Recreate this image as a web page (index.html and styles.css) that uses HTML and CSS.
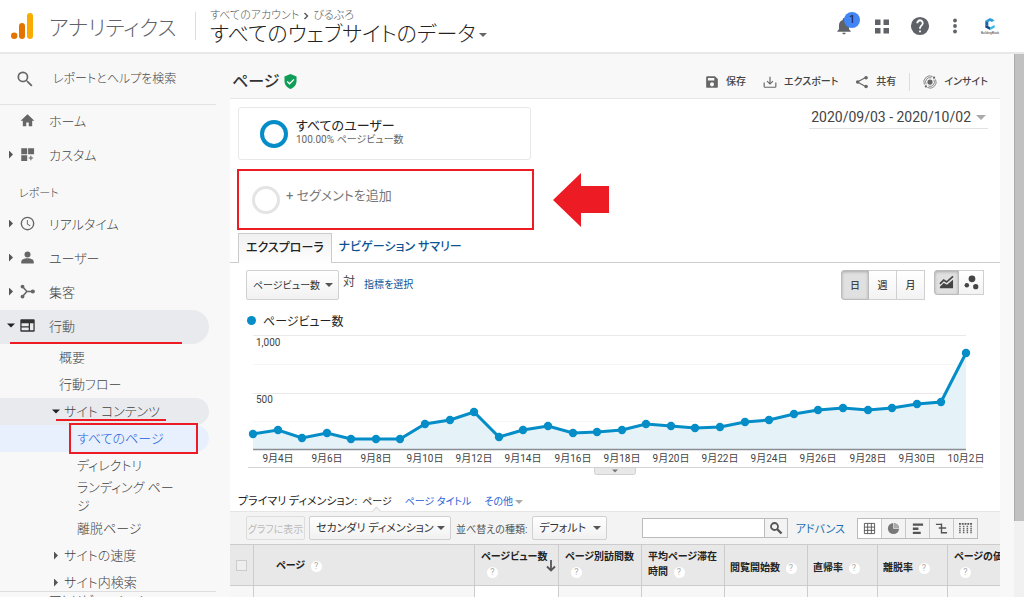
FILE: index.html
```html
<!DOCTYPE html>
<html lang="ja">
<head>
<meta charset="utf-8">
<meta name="viewport" content="width=device-width, initial-scale=1">
<title>アナリティクス</title>
<link rel="stylesheet" href="styles.css">
</head>
<body>
<header class="topbar">
  <svg class="logo" viewBox="0 0 24 26" aria-hidden="true"><rect x="16" y="0" width="6" height="26" rx="3" fill="#f9ab00"/><rect x="8" y="10" width="6" height="16" rx="3" fill="#e37400"/><circle cx="3.200" cy="22.800" r="3.200" fill="#e37400"/></svg>
  <span class="product">アナリティクス</span>
  <button class="account" type="button">
    <span class="crumbs">すべてのアカウント <svg class="crumb-arrow" viewBox="0 0 6 8"><path d="M1.500 1l3 3-3 3" fill="none" stroke="#555" stroke-width="1.400"/></svg> びるぶろ</span>
    <span class="view">すべてのウェブサイトのデータ<i class="caret"></i></span>
  </button>
  <div class="top-actions">
    <button class="icon-btn bell" type="button" aria-label="通知">
      <svg viewBox="0 0 24 24"><path d="M12 22c1.100 0 2-.9 2-2h-4c0 1.100.9 2 2 2zm6-6v-5c0-3.070-1.640-5.640-4.500-6.320V4a1.500 1.500 0 0 0-3 0v.68C7.630 5.360 6 7.920 6 11v5l-2 2v1h16v-1z"/></svg>
      <span class="badge">1</span>
    </button>
    <button class="icon-btn" type="button" aria-label="アプリ"><svg viewBox="0 0 20 20"><path d="M3 3.500h5.500V9H3zM11.500 3.500H17V9h-5.500zM3 12h5.500v5.500H3zM11.500 12H17v5.500h-5.500z"/></svg></button>
    <button class="icon-btn" type="button" aria-label="ヘルプ"><svg viewBox="1 1 22 22"><path d="M12 2a10 10 0 1 0 0 20 10 10 0 0 0 0-20zm1 17h-2v-2h2zm2.070-7.750-.9.920C13.450 12.900 13 13.500 13 15h-2v-.5c0-1.100.45-2.100 1.170-2.830l1.240-1.260A2 2 0 1 0 10 9H8a4 4 0 1 1 7.070 2.250z"/></svg></button>
    <button class="icon-btn more" type="button" aria-label="メニュー"><svg viewBox="0 0 20 20"><circle cx="10" cy="4.500" r="1.900"/><circle cx="10" cy="10" r="1.900"/><circle cx="10" cy="15.500" r="1.900"/></svg></button>
    <button class="icon-btn profile" type="button" aria-label="アカウント">
      <svg viewBox="4 0 12 15"><path d="M5 4l5-3 5 2.500-3 1.800-2-1-2 1.200z" fill="#2d9cdb"/><path d="M5 4l3.200 1.600v4.200L5 8.300z" fill="#1565a8"/><path d="M5 8.300l3.200 1.500 2 1.200V14L5 11.200z" fill="#0d4a86"/><path d="M10.200 11l4.800-2.500v2.800L10.200 14z" fill="#35b5e9"/></svg>
      <span class="profile-name">BuildingBlock</span>
    </button>
  </div>
</header>

<div class="shell">
  <aside class="sidebar">
    <label class="search"><svg viewBox="0 0 24 24"><path d="M15.500 14h-.79l-.28-.27A6.500 6.500 0 1 0 13.730 14.430l.27.28v.79l5.500 5.490L20.990 19.500zM9.500 14a4.500 4.500 0 1 1 0-9 4.500 4.500 0 0 1 0 9z"/></svg><input type="text" placeholder="レポートとヘルプを検索"></label>
    <nav class="nav">
      <a class="item" href="#"><i></i><svg viewBox="0 0 24 24"><path d="M10 21v-6h4v6h5.500v-8.500H23L12 2 1 12.500h3.500V21z"/></svg>ホーム</a>
      <a class="item" href="#"><i class="tri"></i><svg viewBox="0 0 24 24"><path d="M2 2h9.500v9.500H2zM13 2h9.500v9.500H13zM2 13h9.500v9.500H2zM16.500 14h1.800v2.700H21v1.800h-2.700v2.700h-1.800v-2.700h-2.700v-1.800h2.700z"/></svg>カスタム</a>
      <div class="group">レポート</div>
      <a class="item" href="#"><i class="tri"></i><svg viewBox="0 0 24 24"><path d="M12 1a11 11 0 1 0 0 22 11 11 0 0 0 0-22zm0 19.800a8.800 8.800 0 1 1 0-17.600 8.800 8.800 0 0 1 0 17.600zM12.500 6.500H11V13l4.900 3.200.9-1.200-4.300-2.700z"/></svg>リアルタイム</a>
      <a class="item" href="#"><i class="tri"></i><svg viewBox="0 0 24 24"><circle cx="12" cy="7" r="4.800"/><path d="M2 21.500v-2.800c0-3.600 5-5.500 10-5.500s10 1.900 10 5.500v2.800z"/></svg>ユーザー</a>
      <a class="item" href="#"><i class="tri"></i><svg viewBox="0 0 24 24"><path d="M4 4l7 8h9M11 12l-7 8" fill="none" stroke="currentColor" stroke-width="2.400"/><circle cx="4" cy="4" r="3"/><circle cx="4" cy="20" r="3"/><circle cx="20.500" cy="12" r="3.300"/></svg>集客</a>
      <a class="item open" href="#"><i class="tri down"></i><svg viewBox="0 0 24 24"><path fill-rule="evenodd" d="M2 2h20a1.500 1.500 0 0 1 1.500 1.500v17A1.500 1.500 0 0 1 22 22H2a1.500 1.500 0 0 1-1.500-1.500v-17A1.500 1.500 0 0 1 2 2zM2.500 8.500v4.500H14V8.500zM2.500 15v4.500H14V15zM16 8.500v11h5.500v-11z"/></svg><span>行動</span></a>
      <a class="sub" href="#">概要</a>
      <a class="sub" href="#">行動フロー</a>
      <a class="sub branch open" href="#"><i class="tri down"></i><span class="marked">サイト コンテンツ</span></a>
      <a class="sub leaf current" href="#"><span>すべてのページ</span></a>
      <a class="sub leaf" href="#">ディレクトリ</a>
      <a class="sub leaf wrap" href="#">ランディング ページ</a>
      <a class="sub leaf" href="#">離脱ページ</a>
      <a class="sub branch" href="#"><i class="tri"></i>サイトの速度</a>
      <a class="sub branch" href="#"><i class="tri"></i>サイト内検索</a>
    </nav>
    <div class="side-foot">アトリビューション</div>
  </aside>

  <main class="main">
    <div class="page-head">
      <h1>ページ</h1>
      <svg class="shield" viewBox="0 0 14 16"><path d="M7 0l6.500 2.500v5C13.500 11.500 10.500 15 7 16 3.500 15 .5 11.500.5 7.500v-5z" fill="#0f9d58"/><path d="M3.500 8l2.500 2.500 4.700-4.800" fill="none" stroke="#fff" stroke-width="1.500"/></svg>
      <div class="page-actions">
        <button type="button"><svg viewBox="0 0 24 24"><path fill-rule="evenodd" d="M4 2h13l5 5v13a2 2 0 0 1-2 2H4a2 2 0 0 1-2-2V4a2 2 0 0 1 2-2zm8 17.500a3.500 3.500 0 1 0 0-7 3.500 3.500 0 0 0 0 7zM5 5v4.500h11V5z"/></svg>保存</button>
        <button type="button"><svg viewBox="0 0 24 24"><path d="M12 3v12M7 10.500l5 5 5-5M2 13v6.500A1.500 1.500 0 0 0 3.500 21h17a1.500 1.500 0 0 0 1.500-1.500V13" fill="none" stroke="currentColor" stroke-width="2"/></svg>エクスポート</button>
        <button type="button"><svg viewBox="0 0 24 24"><path d="M19 4L4 12l15 8" fill="none" stroke="currentColor" stroke-width="2"/><circle cx="19" cy="4.500" r="3"/><circle cx="4.500" cy="12" r="3"/><circle cx="19" cy="19.500" r="3"/></svg>共有</button>
        <button class="insight" type="button"><svg viewBox="0 0 24 24"><circle cx="12" cy="12" r="4.500"/><path d="M2.500 16.500A10.500 10.500 0 0 1 16.500 2.500M21.500 7.500a10.500 10.500 0 0 1-14 14M5.500 16a7.500 7.500 0 0 1 9-11M18.500 8a7.500 7.500 0 0 1-9 11" fill="none" stroke="currentColor" stroke-width="1.300"/><circle cx="19" cy="4.500" r="2"/><circle cx="5" cy="19.500" r="2"/></svg>インサイト</button>
      </div>
    </div>

    <section class="report">
      <div class="segments">
        <div class="segment-list">
          <div class="segment"><span class="ring"></span><div class="seg-text"><div class="seg-name">すべてのユーザー</div><div class="seg-sub">100.00% ページビュー数</div></div></div>
          <button class="segment-add" type="button"><span class="ring"></span><span>+ セグメントを追加</span></button>
        </div>
        <svg class="pointer" viewBox="0 0 56 54"><path d="M0 27L28 0v13h28v27H28v14z" fill="#ed1c24"/></svg>
        <button class="dates" type="button">2020/09/03 - 2020/10/02<i class="caret"></i></button>
      </div>

      <div class="tabs"><a class="tab active" href="#">エクスプローラ</a><a class="tab" href="#">ナビゲーション サマリー</a></div>

      <div class="chart-tools">
        <span class="select metric"><select aria-label="指標"><option>ページビュー数</option></select></span>
        <span class="versus">対</span>
        <a class="pick" href="#">指標を選択</a>
        <div class="period"><button class="on" type="button">日</button><button type="button">週</button><button type="button">月</button></div>
        <div class="chart-kind">
          <button class="on" type="button" aria-label="折れ線"><svg viewBox="0 0 16 14"><path d="M1 8.500l4-4 3 2 7-6" fill="none" stroke="#444" stroke-width="1.800"/><path d="M1 13v-1.500l4-4 3.500 2L15 4v9z" fill="#444"/></svg></button>
          <button type="button" aria-label="モーション"><svg viewBox="0 0 16 16"><g fill="#444"><circle cx="8.500" cy="4" r="3.600"/><circle cx="3" cy="11" r="2.400"/><circle cx="12.500" cy="12.500" r="2.800"/></g></svg></button>
        </div>
      </div>

      <div class="legend"><i></i>ページビュー数</div>
      <svg class="chart" viewBox="0 0 770 144" role="img" aria-label="ページビュー数の推移">
        <defs><marker id="dot" markerUnits="userSpaceOnUse" markerWidth="10" markerHeight="10" refX="5" refY="5"><circle cx="5" cy="5" r="4.200" fill="#058dc7"/></marker></defs>
        <path class="grid" d="M23 2.500H736M23 60.500H736"/>
        <path class="grid minor" d="M23 31.500H736M23 88.500H736"/>
        <polygon class="area" points="23,117 23,101 48,97 72,105 97,100 121,106 146,106 170,106 195,91 220,87 244,79 269,104 293,97 318,93 343,100 367,99 392,97 416,91 441,93 465,95 490,94 515,89 539,87 564,81 588,77 613,75 638,77 662,75 687,71 711,69 736,20 736,117"/>
        <path d="M23 116.500H736" stroke="#8a8d92" stroke-width="1.500"/>
        <polyline class="line" points="23,101 48,97 72,105 97,100 121,106 146,106 170,106 195,91 220,87 244,79 269,104 293,97 318,93 343,100 367,99 392,97 416,91 441,93 465,95 490,94 515,89 539,87 564,81 588,77 613,75 638,77 662,75 687,71 711,69 736,20"/>
        <text x="26" y="13">1,000</text><text x="26" y="70">500</text>
        <g class="days"><text x="48" y="129">9月4日</text><text x="97" y="129">9月6日</text><text x="146" y="129">9月8日</text><text x="195" y="129">9月10日</text><text x="244" y="129">9月12日</text><text x="293" y="129">9月14日</text><text x="343" y="129">9月16日</text><text x="392" y="129">9月18日</text><text x="441" y="129">9月20日</text><text x="490" y="129">9月22日</text><text x="539" y="129">9月24日</text><text x="588" y="129">9月26日</text><text x="638" y="129">9月28日</text><text x="687" y="129">9月30日</text><text x="736" y="129">10月2日</text></g>
        <path d="M18 134.500H753" stroke="#d4d4d4"/>
        <path d="M364.500 134.500h41v5a2 2 0 0 1-2 2h-37a2 2 0 0 1-2-2z" fill="#e8e8e8" stroke="#d0d0d0"/><path d="M382 136.500h6l-3 3z" fill="#777"/>
      </svg>

      <div class="dimensions"><span class="dim-label">プライマリ ディメンション:</span><span class="chosen">ページ</span><a href="#">ページ タイトル</a><a href="#">その他<i class="caret"></i></a></div>

      <div class="table-tools">
        <button class="plot" type="button" disabled>グラフに表示</button>
        <span class="select second"><select aria-label="セカンダリ ディメンション"><option>セカンダリ ディメンション</option></select></span>
        <label class="sort-label" for="sort">並べ替えの種類:</label>
        <span class="select sort"><select id="sort"><option>デフォルト</option></select></span>
        <div class="find"><input type="text" aria-label="検索"><button type="button" aria-label="検索"><svg viewBox="0 0 14 14"><circle cx="5.500" cy="5.500" r="3.500" fill="none" stroke="#555" stroke-width="1.800"/><path d="M8 8l4.500 4.500" stroke="#555" stroke-width="2.400"/></svg></button></div>
        <a class="advanced" href="#">アドバンス</a>
        <div class="views">
          <button class="on" type="button" aria-label="表"><svg viewBox="0 0 14 14"><path d="M1.500 1.500h11v11h-11zM1.500 5.500h11M1.500 9h11M5 1.500v11M9 1.500v11" fill="none" stroke="#555"/></svg></button>
          <button type="button" aria-label="割合"><svg viewBox="0 0 14 14"><circle cx="7" cy="7" r="6" fill="#777"/><path d="M7 1v6h6A6 6 0 0 0 7 1z" fill="#aaa"/><path d="M7 1v6h6" fill="none" stroke="#eee" stroke-width=".7"/></svg></button>
          <button type="button" aria-label="サマリー"><svg viewBox="0 0 14 14"><path d="M2 1.500h11v2.500H2zM2 6h6v2.500H2zM2 10.500h8.500V13H2z" fill="#555"/></svg></button>
          <button type="button" aria-label="比較"><svg viewBox="0 0 14 14"><path d="M1 2.500h6M4 6.500h8M7 11.500h6M7 1.500V12.500" fill="none" stroke="#555" stroke-width="1.500"/></svg></button>
          <button type="button" aria-label="ピボット"><svg viewBox="0 0 14 14"><path d="M0 2h14" stroke="#555" stroke-width="2" stroke-dasharray="2 1"/><path d="M1 4v9M5 4v9M9 4v9M13 4v9" stroke="#666" stroke-width="1.600" stroke-dasharray="1.500 .7"/></svg></button>
        </div>
      </div>

      <div class="table-wrap">
        <table>
          <colgroup><col class="c-check"><col class="c-page"><col class="c-views"><col class="c-mid"><col class="c-mid"><col class="c-mid"><col class="c-rate"><col class="c-rate"><col class="c-value"></colgroup>
          <thead><tr>
            <th><input type="checkbox" aria-label="すべて選択"></th>
            <th class="page-col">ページ <b>?</b></th>
            <th class="two sorted"><span>ページビュー数</span><b>?</b><svg viewBox="0 0 10 12"><path d="M5 0v10M1 6.500l4 4 4-4" fill="none" stroke="#555" stroke-width="1.800"/></svg></th>
            <th class="two"><span>ページ別訪問数</span><b>?</b></th>
            <th class="two">平均ページ滞在時間 <b>?</b></th>
            <th>閲覧開始数 <b>?</b></th>
            <th>直帰率 <b>?</b></th>
            <th>離脱率 <b>?</b></th>
            <th class="two"><span>ページの価値</span><b>?</b></th>
          </tr></thead>
          <tbody><tr><td></td><td></td><td class="hot"></td><td></td><td></td><td></td><td></td><td></td><td></td></tr></tbody>
        </table>
      </div>
    </section>
  </main>
  <div class="scroll"><div class="thumb"></div></div>
</div>
</body>
</html>
```
FILE: styles.css
```css
* { box-sizing: border-box; }
body {
  margin: 0; height: 100vh; overflow: hidden; display: flex; flex-direction: column;
  font-family: Roboto, "Noto Sans CJK JP", sans-serif; font-size: 12px; color: #444; background: #f8f8f8;
  font-feature-settings: "palt";
}
button, input, select { font: inherit; font-feature-settings: inherit; color: inherit; margin: 0; padding: 0; border: 0; background: none; }
a { text-decoration: none; color: inherit; }
svg { fill: currentColor; flex: none; display: block; }
.caret { display: inline-block; border: 4px solid transparent; border-top: 4px solid #666; border-bottom: 0; vertical-align: middle; }

.topbar { flex: none; height: 54px; display: flex; align-items: center; background: #fff; border-bottom: 2px solid #e8e8e8; padding: 0 24px 0 11px; }
.logo { width: 24px; height: 26px; }
.product { margin-left: 14px; width: 146px; font-size: 21px; font-weight: 300; color: #5f6368; }
.account { text-align: left; border-left: 1px solid #dadce0; padding-left: 14px; height: 28px; display: flex; flex-direction: column; justify-content: center; white-space: nowrap; }
.crumbs { font-size: 11px; line-height: 16px; color: #555; display: flex; align-items: center; gap: 4px; font-weight: 300; }
.crumb-arrow { width: 6px; height: 8px; }
.view { font-size: 21px; line-height: 20px; font-weight: 300; color: #222; }
.view .caret { margin-left: 3px; }
.top-actions { margin-left: auto; display: flex; align-items: center; gap: 18px; color: #5f6368; }
.icon-btn { position: relative; width: 20px; height: 22px; display: flex; align-items: center; justify-content: center; }
.icon-btn svg { width: 20px; height: 20px; }
.more { width: 14px; }
.bell { width: 20px; }
.badge { position: absolute; left: 10px; top: -3px; width: 16px; height: 16px; border-radius: 8px; background: #4285f4; color: #202124; font-size: 11px; line-height: 16px; text-align: center; }
.profile { flex-direction: column; color: #333; }
.profile svg { width: 12px; height: 14px; }
.profile-name { font-size: 3px; line-height: 4px; }

.shell { flex: 1; min-height: 0; display: flex; }
.sidebar { width: 230px; flex: none; display: flex; flex-direction: column; font-size: 13px; font-weight: 300; color: #444; }
.search { flex: none; display: flex; align-items: center; width: 216px; height: 51px; padding-left: 15px; border-bottom: 1px solid #e2e2e2; gap: 18px; color: #666; }
.search svg { width: 20px; height: 20px; }
.search input { width: 150px; font-size: 12px; font-weight: 300; outline: 0; }
.search input::placeholder { color: #444; opacity: 1; }
.nav { flex: 1; min-height: 0; overflow: hidden; }
.item { display: flex; align-items: center; height: 34px; width: 209px; border-radius: 0 17px 17px 0; padding: 0 0 3px 7px; position: relative; }
.item > i { margin-right: 5px; flex: none; width: 8px; }
.item svg { width: 15px; height: 15px; margin-right: 14px; color: #666; }
.tri { display: block; width: 8px; height: 8px; background: #555; clip-path: polygon(25% 0, 75% 50%, 25% 100%); }
.tri.down { clip-path: polygon(0 25%, 100% 25%, 50% 75%); background: #222; }
.group { height: 35px; padding: 12px 0 0 19px; font-size: 11px; line-height: 18px; }
.open { background: #e8eaed; }
.item.open svg { color: #333; }
.item.open::after { content: ""; position: absolute; left: 10px; right: 27px; bottom: 0; height: 2px; background: #ed1c24; }
.sub { display: flex; align-items: center; height: 27px; width: 209px; padding-left: 59px; border-radius: 0 14px 14px 0; line-height: 18px; position: relative; }
.branch { padding-left: 52px; }
.branch .tri { margin-right: 4px; }
.leaf { padding-left: 77px; }
.marked::after { content: ""; position: absolute; left: 56px; width: 110px; bottom: 4px; height: 2px; background: #ed1c24; }
.current { background: #e8f0fe; color: #1a5fd8; }
.current::after { content: ""; position: absolute; left: 69px; right: 11px; top: -2px; bottom: -2px; border: 2px solid #ed1c24; }
.wrap { height: 36px; padding-right: 30px; }
.side-foot { flex: none; height: 6px; overflow: hidden; border-top: 1px solid #ddd; padding-left: 49px; line-height: 18px; width: 216px; }

.main { flex: 1; min-width: 0; margin-right: 14px; display: flex; flex-direction: column; }
.page-head { flex: none; display: flex; align-items: center; height: 44px; padding: 11px 12px 0 2px; }
h1 { margin: 0; font-size: 16px; line-height: 24px; font-weight: 500; color: #333; }
.shield { width: 13px; height: 15px; margin-left: 5px; }
.page-actions { margin-left: auto; display: flex; align-items: center; }
.page-actions button { display: flex; align-items: center; gap: 7px; margin-left: 17px; font-size: 10px; font-weight: 500; white-space: nowrap; color: #444; line-height: 18px; }
.page-actions svg { width: 14px; height: 14px; color: #666; }
.page-actions .insight { border-left: 1px solid #ddd; padding-left: 13px; margin-left: 13px; }

.report { flex: 1; min-height: 0; background: #fff; border-top: 1px solid #e6e6e6; overflow: hidden; }
.segments { display: flex; padding: 8px 12px 0 8px; }
.segment-list { width: 293px; }
.segment { display: flex; align-items: center; height: 53px; border: 1px solid #e8e8e8; border-radius: 3px; padding-left: 21px; gap: 8px; }
.ring { width: 28px; height: 28px; flex: none; border: 4px solid #058dc7; border-radius: 50%; }
.seg-text { padding-bottom: 4px; }
.seg-name { font-size: 13px; line-height: 16px; color: #222; }
.seg-sub { font-size: 10px; line-height: 12px; color: #666; }
.segment-add { display: flex; align-items: center; width: 297px; height: 61px; margin: 9px -1px 0; border: 2px solid #ed1c24; padding-left: 13px; gap: 6px; color: #777; font-size: 13px; line-height: 20px; }
.segment-add span:last-child { padding-bottom: 8px; }
.segment-add .ring { border-color: #e4e4e4; border-width: 3px; }
.pointer { width: 56px; height: 54px; margin: 66px 0 0 22px; }
.dates { margin-left: auto; height: 22px; font-size: 14px; line-height: 21px; border-bottom: 1px solid #e2e2e2; padding: 0 2px; display: flex; align-items: center; gap: 5px; }
.dates .caret { border-width: 5px 5px 0; border-top-color: #aaa; }
.tabs { display: flex; margin-top: 3px; padding-left: 8px; border-bottom: 1px solid #ccc; }
.tab { height: 28px; padding: 0 7px; font-size: 12px; line-height: 29px; font-weight: 500; color: #0b5394; white-space: nowrap; }
.tab.active { height: 30px; margin-bottom: -1px; border: 1px solid #ccc; border-bottom: 0; background: linear-gradient(#f0f0f0, #fff); color: #222; }

.chart-tools { display: flex; align-items: flex-start; padding: 7px 16px 0; }
.select { position: relative; display: block; flex: none; }
.select select { appearance: none; width: 100%; height: 100%; border: 1px solid #d0d0d0; border-radius: 2px; background: linear-gradient(#fff, #f1f1f1); padding-left: 6px; font-size: 11px; color: #333; }
.select::after { content: ""; position: absolute; right: 6px; top: 50%; margin-top: -2px; border: 4px solid transparent; border-top-color: #555; border-bottom: 0; pointer-events: none; }
.metric { width: 93px; height: 30px; }
.select.metric select { font-size: 10px; }
.versus { margin: 2px 9px 0 4px; line-height: 20px; }
.pick { color: #0b5394; font-size: 10px; line-height: 30px; }
.period { margin-left: auto; display: flex; }
.period button, .chart-kind button { width: 28px; height: 30px; border: 1px solid #d0d0d0; border-left-width: 0; background: linear-gradient(#fff, #f3f3f3); display: flex; align-items: center; justify-content: center; }
.period button { font-size: 10px; font-weight: 500; padding-bottom: 1px; }
.period button:first-child, .chart-kind button:first-child { border-left-width: 1px; border-radius: 3px 0 0 3px; }
.chart-kind { display: flex; margin-left: 9px; }
.chart-kind button { width: 25px; height: 25px; }
.chart-kind svg { width: 15px; height: 15px; }
.period .on, .chart-kind .on { background: #e0e0e0; box-shadow: inset 0 1px 3px #aaa; border-color: #bbb; }
.legend { margin: 9px 0 2px; height: 22px; padding-left: 17px; display: flex; align-items: center; gap: 7px; font-size: 12px; color: #222; }
.legend i { width: 9px; height: 9px; border-radius: 50%; background: #058dc7; }
.chart { width: 100%; height: auto; }
.grid { stroke: #e9e9e9; }
.minor { stroke: #f6f6f6; }
.area { fill: #e5f3f9; }
.line { fill: none; stroke: #058dc7; stroke-width: 3; marker-start: url(#dot); marker-mid: url(#dot); marker-end: url(#dot); }
.chart text { font-size: 10px; fill: #444; }
.days { text-anchor: middle; }

.dimensions { display: flex; gap: 13px; padding-left: 8px; margin-top: 14px; height: 21px; line-height: 22px; font-size: 10px; border-bottom: 1px solid #e5e5e5; color: #222; white-space: nowrap; }
.dimensions .dim-label { margin-right: -8px; font-size: 11px; }
.dimensions a { color: #2a62d8; }
.dimensions .caret { border-top-color: #aaa; margin-left: 2px; }
.chosen { position: relative; }
.chosen::after { content: ""; position: absolute; left: 50%; bottom: -4px; width: 6px; height: 6px; margin-left: -4px; transform: rotate(45deg); border: solid #ddd; border-width: 1px 0 0 1px; background: #f3f3f3; }
.table-tools { display: flex; align-items: center; height: 32px; background: #f3f3f3; padding: 0 22px 0 16px; white-space: nowrap; }
.plot { width: 59px; height: 24px; border: 1px solid #ddd; border-radius: 2px; font-size: 10px; color: #bbb; }
.second { width: 142px; height: 24px; margin-left: 4px; }
.sort-label { margin: 0 5px; font-size: 10px; color: #555; }
.sort { width: 75px; height: 24px; }
.find { display: flex; margin-left: auto; height: 20px; border: 1px solid #bbb; background: #fff; }
.find input { width: 121px; outline: 0; }
.find button { width: 23px; border-left: 1px solid #bbb; background: #f3f3f3; display: flex; align-items: center; justify-content: center; }
.find svg { width: 14px; height: 14px; }
.advanced { margin: 0 12px 0 8px; font-size: 11px; color: #1a6fb0; }
.views { display: flex; border: 1px solid #bbb; height: 21px; }
.views button { width: 23px; flex: 0 0 auto; box-sizing: content-box; display: flex; align-items: center; justify-content: center; border-left: 1px solid #c8c8c8; }
.views button:first-child { border-left: 0; background: #fff; }
.views svg { width: 13px; height: 13px; }

.table-wrap { overflow: hidden; }
table { width: 800px; table-layout: fixed; border-collapse: separate; border-spacing: 0; border-top: 1px solid #ccc; }
.c-check { width: 24px; } .c-page { width: 221px; } .c-views { width: 84px; } .c-mid { width: 83px; } .c-rate { width: 70px; } .c-value { width: 82px; }
th { height: 41px; padding: 4px 4px 0 5px; text-align: left; background: #e8e8e8; border-right: 1px solid #ccc; border-bottom: 1px solid #ccc; font-size: 10px; font-weight: 700; line-height: 15px; color: #222; position: relative; }
th:first-child { padding: 0 0 0 6px; }
th input { appearance: none; display: block; width: 11px; height: 11px; border: 1px solid #ccc; background: #eee; }
th.two { padding: 4px 4px 0 6px; vertical-align: top; }
.two span { display: block; white-space: nowrap; }
.two span + b { margin-left: 6px; }
th.page-col { padding: 0 0 0 22px; }
th b { display: inline-block; width: 11px; height: 11px; margin-left: 3px; border-radius: 50%; background: #fff; color: #aaa; font-size: 9px; line-height: 11px; text-align: center; font-weight: 400; }
.sorted svg { position: absolute; right: 2px; bottom: 13px; width: 10px; height: 12px; }
td { height: 24px; background: #f7f7f7; border-right: 1px solid #ccc; }
td.hot { background: #fff; }

.scroll { width: 10px; flex: none; background: #f1f1f1; }
.thumb { height: 86%; background: #c1c1c1; border-left: 1px solid #aaa; }
```
